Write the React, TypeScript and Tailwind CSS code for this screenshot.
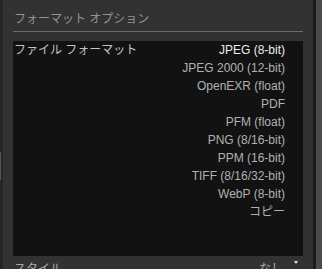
import React from 'react';

const formats = [
  'JPEG (8-bit)',
  'JPEG 2000 (12-bit)',
  'OpenEXR (float)',
  'PDF',
  'PFM (float)',
  'PNG (8/16-bit)',
  'PPM (16-bit)',
  'TIFF (8/16/32-bit)',
  'WebP (8-bit)',
  'コピー',
];

export default function App() {
  const selected = 0;

  return (
    <div
      className="flex w-[322px] h-[269px] overflow-hidden bg-[#262626] text-[12px]"
      style={{ fontFamily: '"Liberation Sans", "Noto Sans CJK JP", sans-serif' }}
    >
      {/* left edge */}
      <div className="flex flex-col w-[3px]">
        <div className="h-[152px]" />
        <div className="w-[1px] h-[28px] bg-[#555555]" />
      </div>

      {/* options panel */}
      <div className="flex flex-col w-[310px] bg-[#323232] px-[10px]">
        <div className="shrink-0 h-[31px] pt-[11px] pl-[1px] leading-[16px] text-[#929292]">
          フォーマット オプション
        </div>
        <div className="shrink-0 h-[1px] bg-[#6c6c6c]" />

        <div className="shrink-0 flex justify-between mt-[9px] h-[215px] bg-[#121212]">
          <div className="pl-[1px] leading-[18px] text-[#c4c4c4]">ファイル フォーマット</div>
          <div className="flex flex-col pr-[18px] text-right">
            {formats.map((f, i) => (
              <div
                key={f}
                className={`h-[18px] leading-[18px] ${i === selected ? 'text-[#ececec]' : 'text-[#aeb2b6]'}`}
              >
                {f}
              </div>
            ))}
          </div>
        </div>

        <div className="shrink-0 flex justify-between h-[18px] mt-[4px] leading-[18px] pl-[1px] pr-[5px] text-[#a8acb0]">
          <span>スタイル</span>
          <div className="flex">
            <span>なし</span>
            <span className="mt-[1px] ml-[11px] w-0 h-0 border-l-[2px] border-r-[2px] border-t-[3px] border-l-transparent border-r-transparent border-t-[#dddddd]" />
          </div>
        </div>
      </div>

      {/* right edge */}
      <div className="w-[3px] bg-[#1c1c1c]" />
      <div className="w-[6px] bg-[#4a4a4a]" />
    </div>
  );
}
